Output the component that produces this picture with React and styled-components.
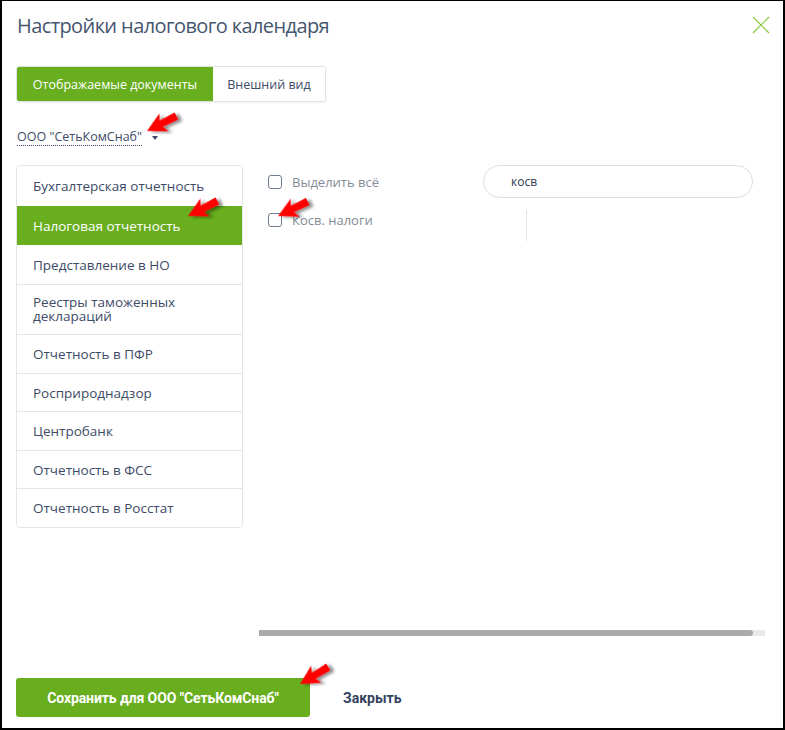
import React from "react";
import styled, { createGlobalStyle } from "styled-components";

const Global = createGlobalStyle`
  html, body { margin: 0; padding: 0; background: #fff; }
  body { font-family: "Open Sans", "Noto Sans", sans-serif; }
  * { box-sizing: border-box; }
`;

const GREEN = "#68ae1f";
const TEXT = "#3d4b66";

const Modal = styled.div`
  position: relative;
  width: 785px;
  height: 730px;
  border-style: solid;
  border-color: #000;
  border-width: 1px 2px 2px 2px;
  padding: 10px 13px 0 14px;
  display: flex;
  flex-direction: column;
  background: #fff;
`;

const Header = styled.div`
  display: flex;
  justify-content: space-between;
  align-items: flex-start;
  padding-left: 1px;
`;

const Title = styled.h1`
  margin: 0;
  font-weight: 400;
  font-size: 20px;
  letter-spacing: -0.6px;
  line-height: 29px;
  color: #46566f;
`;

const Close = styled.button`
  border: 0;
  background: none;
  padding: 0;
  margin-top: 5px;
  width: 18px;
  height: 18px;
  cursor: pointer;
`;

const Tabs = styled.div`
  margin-top: 26px;
  display: inline-flex;
  align-self: flex-start;
  height: 36px;
  border: 1px solid #e2e2e2;
  border-radius: 3px;
  box-shadow: 0 1px 2px rgba(0,0,0,0.06);
  overflow: hidden;
`;

const Tab = styled.div`
  display: flex;
  align-items: center;
  font-size: 12.5px;
  background: ${p => (p.$active ? GREEN : "#fff")};
  color: ${p => (p.$active ? "#fff" : TEXT)};
  width: ${p => p.$w}px;
  justify-content: center;
`;

const Company = styled.div`
  margin-top: 26px;
  display: flex;
  align-items: center;
  gap: 10px;
  height: 18px;
  padding-left: 1px;
`;

const CompanyName = styled.span`
  font-size: 12.5px;
  color: ${TEXT};
  border-bottom: 1px dotted ${TEXT};
  line-height: 16px;
`;

const Caret = styled.span`
  width: 0;
  height: 0;
  border-left: 3.5px solid transparent;
  border-right: 3.5px solid transparent;
  border-top: 4px solid ${TEXT};
  margin-top: 2px;
`;

const Body = styled.div`
  margin-top: 19px;
  display: flex;
  gap: 16px;
  height: 475px;
`;

const List = styled.div`
  width: 227px;
  align-self: flex-start;
  border: 1px solid #e4e4e4;
  border-radius: 4px;
  overflow: hidden;
`;

const Item = styled.div`
  padding: ${p => (p.$tall ? "10px 16px 11px" : "0 16px")};
  height: ${p => (p.$tall ? "auto" : p.$h + "px")};
  display: flex;
  align-items: center;
  font-size: 13.5px;
  line-height: 14px;
  color: ${p => (p.$active ? "#fff" : TEXT)};
  background: ${p => (p.$active ? GREEN : "#fff")};
  border-top: ${p => (p.$first ? "0" : p.$active || p.$afterActive ? "0" : "1px solid #e6e6e6")};
`;

const Right = styled.div`
  flex: 0 0 506px;
  display: flex;
  flex-direction: column;
`;

const TopRow = styled.div`
  display: flex;
  justify-content: space-between;
  align-items: center;
  padding-left: 9px;
  padding-right: 12px;
  height: 33px;
`;

const Check = styled.label`
  display: flex;
  align-items: center;
  gap: 10px;
  font-size: 13px;
  color: #838b97;
`;

const Box = styled.span`
  width: 14px;
  height: 14px;
  border: 1.5px solid #6f7b90;
  border-radius: 3px;
  display: inline-block;
`;

const Search = styled.div`
  width: 270px;
  height: 33px;
  border: 1px solid #dedede;
  border-radius: 17px;
  display: flex;
  align-items: center;
  padding-left: 27px;
  font-size: 12px;
  color: #2e3b55;
`;

const Columns = styled.div`
  margin-top: 12px;
  display: flex;
  padding-left: 9px;
`;

const Column = styled.div`
  width: 259px;
  height: 31px;
  border-right: 1px solid #e2e2e2;
  padding-top: 1px;
`;

const Scroll = styled.div`
  margin-top: auto;
  margin-bottom: 4px;
  height: 6px;
  width: 506px;
  background: #e9e9e9;
`;

const Thumb = styled.div`
  height: 100%;
  width: 494px;
  background: #aaaaaa;
  border-radius: 0 3px 3px 0;
`;

const Footer = styled.div`
  margin-top: 38px;
  display: flex;
  align-items: center;
  gap: 33px;
`;

const SaveButton = styled.button`
  width: 294px;
  height: 39px;
  border: 0;
  border-radius: 3px;
  background: ${GREEN};
  color: #fff;
  font-family: Roboto, "Noto Sans", sans-serif;
  font-weight: 700;
  font-size: 14px;
  letter-spacing: -0.1px;
`;

const LinkButton = styled.button`
  border: 0;
  background: none;
  padding: 0;
  color: #33425e;
  font-family: Roboto, "Noto Sans", sans-serif;
  font-weight: 700;
  font-size: 14px;
`;

const Overlay = styled.svg`
  position: absolute;
  left: -2px;
  top: -1px;
  width: 785px;
  height: 730px;
  pointer-events: none;
`;

const arrows = [
  { x: 147, y: 131, a: -27 },
  { x: 188, y: 216, a: -27 },
  { x: 278, y: 216, a: -26 },
  { x: 300, y: 684, a: -31 },
];

const items = [
  "Бухгалтерская отчетность",
  "Налоговая отчетность",
  "Представление в НО",
  "Реестры таможенных деклараций",
  "Отчетность в ПФР",
  "Росприроднадзор",
  "Центробанк",
  "Отчетность в ФСС",
  "Отчетность в Росстат",
];
const heights = [40, 39, 39, 0, 39, 38, 39, 38, 39];

export default function App() {
  return (
    <>
      <Global />
      <Modal>
        <Header>
          <Title>Настройки налогового календаря</Title>
          <Close aria-label="close">
            <svg width="18" height="18" viewBox="0 0 18 18">
              <path d="M1 1 L17 17 M17 1 L1 17" stroke="#8cc63f" strokeWidth="1.2" fill="none" />
            </svg>
          </Close>
        </Header>
        <Tabs>
          <Tab $active $w={196}>Отображаемые документы</Tab>
          <Tab $w={112}>Внешний вид</Tab>
        </Tabs>
        <Company>
          <CompanyName>ООО "СетьКомСнаб"</CompanyName>
          <Caret />
        </Company>
        <Body>
          <List>
            {items.map((t, i) => (
              <Item
                key={t}
                $first={i === 0}
                $active={i === 1}
                $afterActive={i === 2}
                $tall={i === 3}
                $h={heights[i]}
              >
                {t}
              </Item>
            ))}
          </List>
          <Right>
            <TopRow>
              <Check><Box />Выделить всё</Check>
              <Search>косв</Search>
            </TopRow>
            <Columns>
              <Column>
                <Check><Box />Косв. налоги</Check>
              </Column>
            </Columns>
            <Scroll><Thumb /></Scroll>
          </Right>
        </Body>
        <Footer>
          <SaveButton>Сохранить для ООО "СетьКомСнаб"</SaveButton>
          <LinkButton>Закрыть</LinkButton>
        </Footer>
        <Overlay viewBox="0 0 785 730">
          <defs>
            <filter id="sh" x="-50%" y="-50%" width="200%" height="200%">
              <feGaussianBlur in="SourceAlpha" stdDeviation="1.5" />
              <feOffset dx="3" dy="3" result="b" />
              <feComponentTransfer><feFuncA type="linear" slope="0.45" /></feComponentTransfer>
              <feMerge><feMergeNode /><feMergeNode in="SourceGraphic" /></feMerge>
            </filter>
          </defs>
          {arrows.map((r, i) => (
            <polygon
              key={i}
              transform={`translate(${r.x} ${r.y}) rotate(${r.a})`}
              points="0,0 19,-10 16,-3.5 33,-4 33,4 16,3.5 19,10"
              fill="#ff0000"
              filter="url(#sh)"
            />
          ))}
        </Overlay>
      </Modal>
    </>
  );
}
